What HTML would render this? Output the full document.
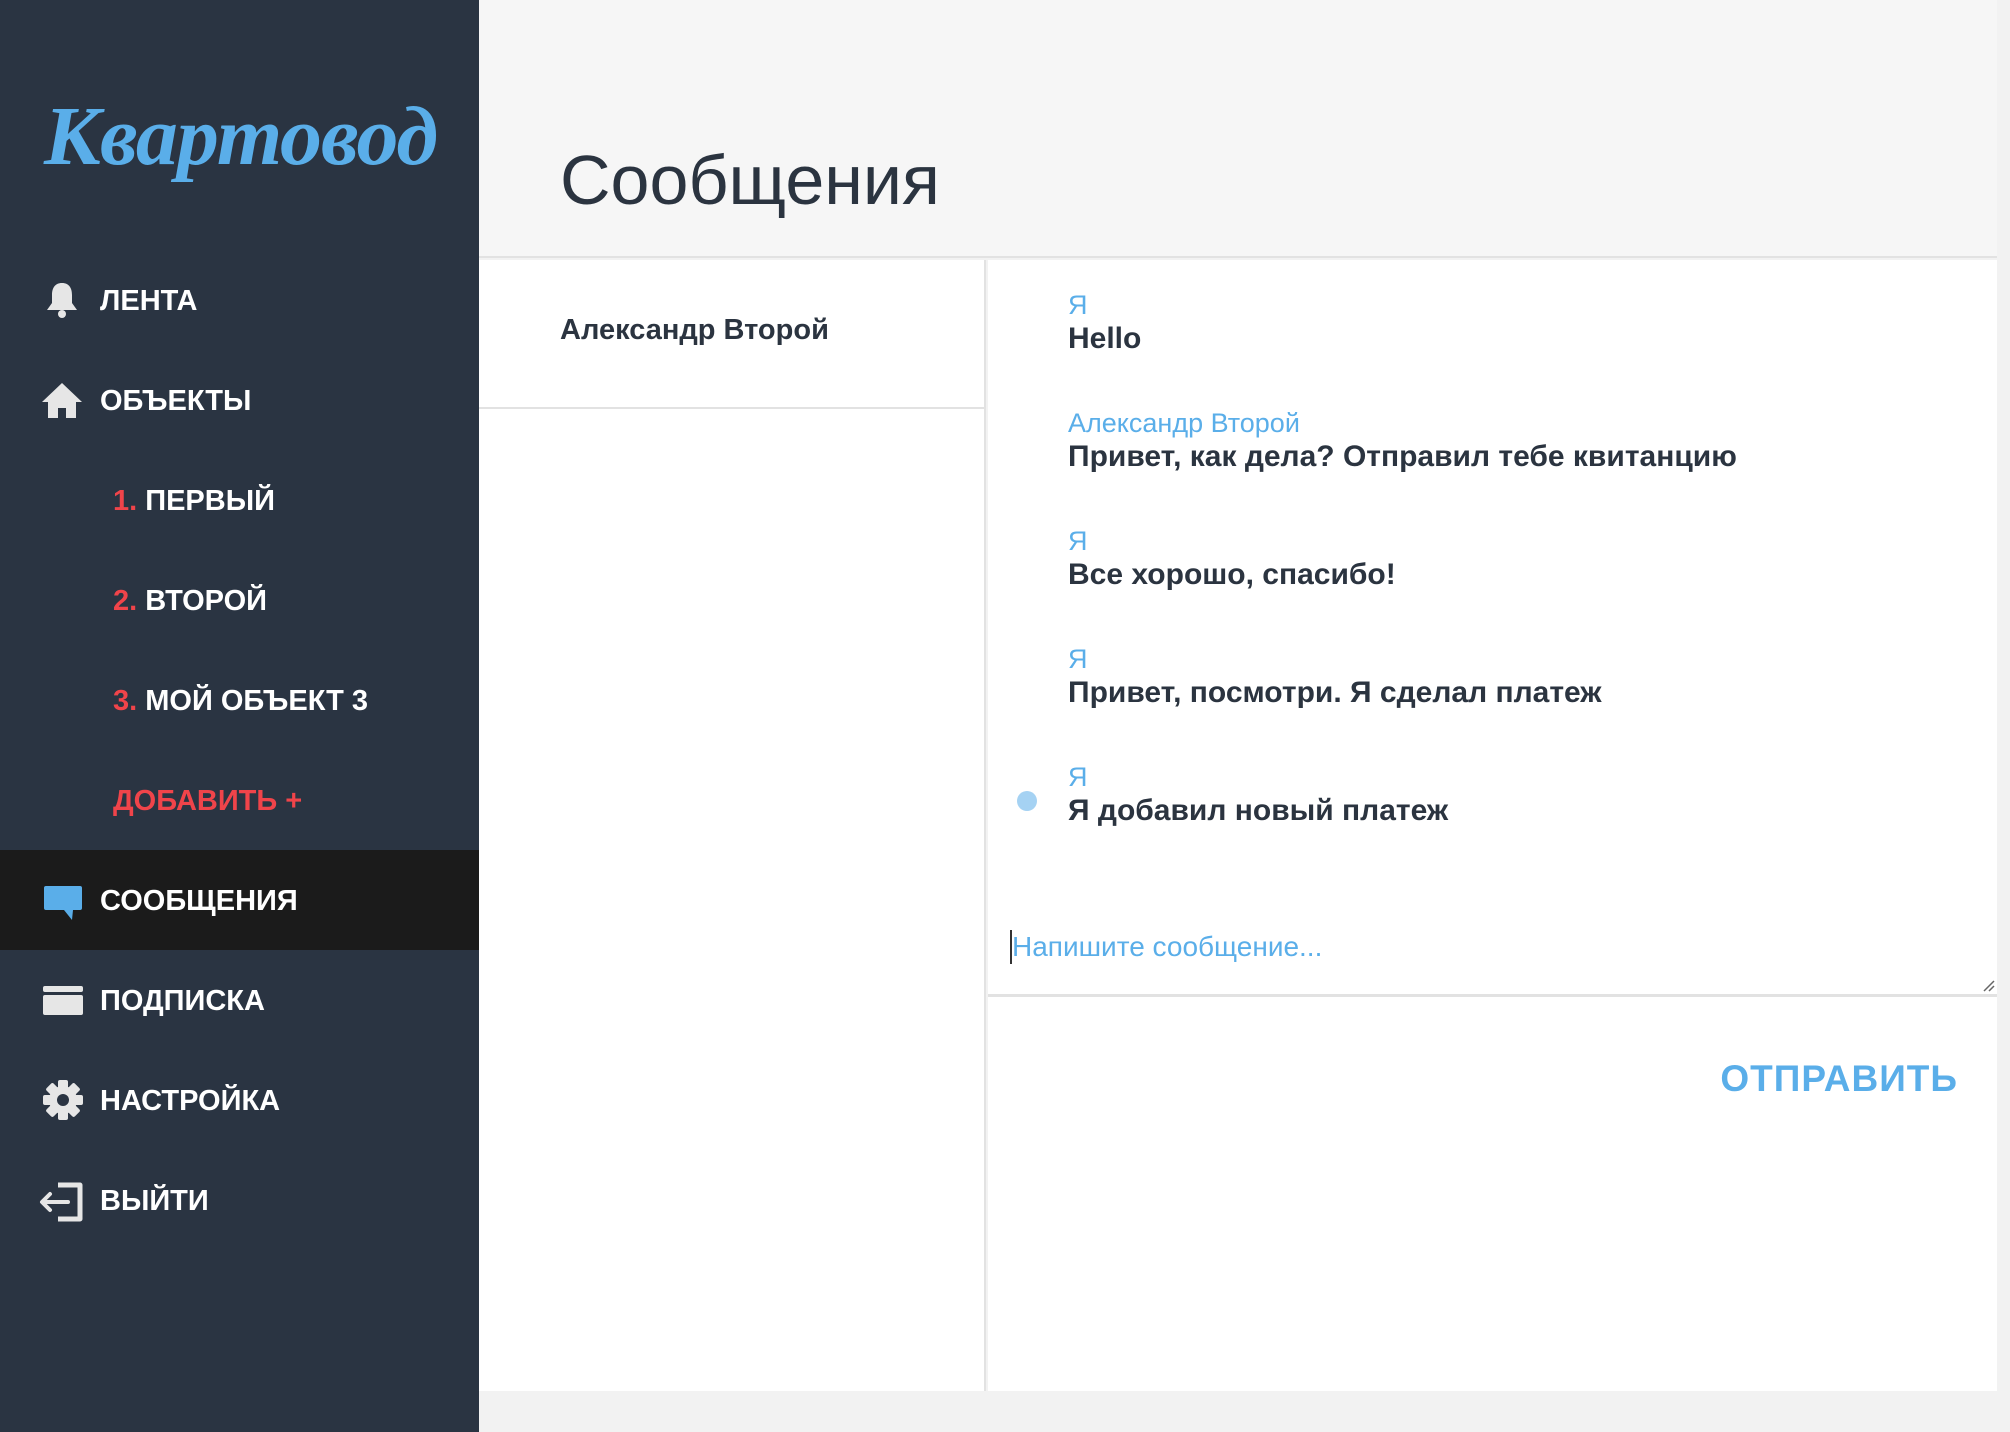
<!DOCTYPE html>
<html><head><meta charset="utf-8"><style>
*{margin:0;padding:0;box-sizing:border-box}
body{width:2010px;height:1432px;background:#f2f2f2;font-family:"Liberation Sans",sans-serif;position:relative;overflow:hidden}
.sb{position:absolute;left:0;top:0;width:479px;height:1432px;background:#2a3442}
.logo{position:absolute;left:44px;top:88px;font-family:"Liberation Serif",serif;font-style:italic;font-weight:bold;font-size:84px;color:#5aaee9;letter-spacing:-1px}
.mi{position:absolute;left:0;width:479px;height:100px;color:#fff;font-weight:bold;font-size:29px;line-height:102px;padding-left:100px}
.mi.sub{padding-left:113px}
.mi.act{background:#1b1b1b}
.red{color:#f0444a}
.ic{position:absolute;left:42px;top:30px}
.hdr{position:absolute;left:479px;top:0;width:1518px;height:258px;background:#f6f6f6;border-bottom:2px solid #e2e2e2}
.hdr h1{position:absolute;left:81px;top:140px;font-weight:normal;font-size:70px;color:#2b3440}
.left{position:absolute;left:479px;top:260px;width:507px;height:1131px;background:#fff;border-right:2px solid #e2e2e2}
.contact{height:149px;border-bottom:2px solid #e2e2e2;font-size:29px;font-weight:bold;color:#2b3440;padding:54px 0 0 81px}
.right{position:absolute;left:988px;top:260px;width:1009px;height:1131px;background:#fff}
.msg{position:absolute;left:80px}
.msg .n{font-size:27px;color:#5aaee9;line-height:32px}
.msg .t{font-size:30px;font-weight:bold;color:#2b3440;line-height:36px}
.ta{position:absolute;left:0;top:655px;width:1009px;height:82px;border-bottom:3px solid #e2e2e2}
.ph{position:absolute;left:22px;top:15px;font-size:28px;color:#5aaee9;border-left:2px solid #333;line-height:34px}
.send{position:absolute;right:39px;top:798px;font-size:37px;font-weight:bold;color:#5aaee9;letter-spacing:1px}
.dot{position:absolute;left:29px;top:531px;width:20px;height:20px;border-radius:50%;background:#a5d2f3}
</style></head><body>
<div class="sb">
<div class="logo">Квартовод</div>
<div class="mi" style="top:250px"><svg class="ic" width="40" height="40" viewBox="0 0 40 40"><path d="M20 3c-7 0-10 5-10 12v8l-5 7h30l-5-7v-8c0-7-3-12-10-12z" fill="#e6e6e6"/><circle cx="20" cy="34" r="4" fill="#e6e6e6"/></svg>ЛЕНТА</div>
<div class="mi" style="top:350px"><svg class="ic" width="44" height="40" viewBox="0 0 44 40" style="left:40px"><path d="M22 3L2 22h6v16h10V28h8v10h10V22h6z" fill="#e6e6e6"/></svg>ОБЪЕКТЫ</div>
<div class="mi sub" style="top:450px"><span class="red">1.</span> ПЕРВЫЙ</div>
<div class="mi sub" style="top:550px"><span class="red">2.</span> ВТОРОЙ</div>
<div class="mi sub" style="top:650px"><span class="red">3.</span> МОЙ ОБЪЕКТ 3</div>
<div class="mi sub red" style="top:750px">ДОБАВИТЬ +</div>
<div class="mi act" style="top:850px"><svg class="ic" width="40" height="40" viewBox="0 0 40 40" style="left:43px;top:34px"><path d="M3 2h34a2 2 0 0 1 2 2v20a2 2 0 0 1-2 2H30l-1 10-8-10H3a2 2 0 0 1-2-2V4a2 2 0 0 1 2-2z" fill="#5aaee9"/></svg>СООБЩЕНИЯ</div>
<div class="mi" style="top:950px"><svg class="ic" width="42" height="34" viewBox="0 0 42 34" style="top:35px"><rect x="1" y="1" width="40" height="6" rx="2" fill="#e6e6e6"/><rect x="1" y="10" width="40" height="20" rx="2" fill="#e6e6e6"/></svg>ПОДПИСКА</div>
<div class="mi" style="top:1050px"><svg class="ic" width="42" height="42" viewBox="0 0 42 42" style="top:29px"><g fill="#e6e6e6"><circle cx="21" cy="21" r="14"/><rect x="16" y="1" width="10" height="40" rx="2"/><rect x="16" y="1" width="10" height="40" rx="2" transform="rotate(45 21 21)"/><rect x="16" y="1" width="10" height="40" rx="2" transform="rotate(90 21 21)"/><rect x="16" y="1" width="10" height="40" rx="2" transform="rotate(135 21 21)"/></g><circle cx="21" cy="21" r="6" fill="#2a3442"/></svg>НАСТРОЙКА</div>
<div class="mi" style="top:1150px"><svg class="ic" width="46" height="40" viewBox="0 0 46 40" style="left:38px;top:32px"><path d="M20 3h22v34H20" fill="none" stroke="#e6e6e6" stroke-width="5" stroke-linejoin="round"/><path d="M30 20H5M12 12l-8 8 8 8" fill="none" stroke="#e6e6e6" stroke-width="4" stroke-linecap="round" stroke-linejoin="round"/></svg>ВЫЙТИ</div>
</div>
<div class="hdr"><h1>Сообщения</h1></div>
<div class="left"><div class="contact">Александр Второй</div></div>
<div class="right">
<div class="msg" style="top:29px"><div class="n">Я</div><div class="t">Hello</div></div>
<div class="msg" style="top:147px"><div class="n">Александр Второй</div><div class="t">Привет, как дела? Отправил тебе квитанцию</div></div>
<div class="msg" style="top:265px"><div class="n">Я</div><div class="t">Все хорошо, спасибо!</div></div>
<div class="msg" style="top:383px"><div class="n">Я</div><div class="t">Привет, посмотри. Я сделал платеж</div></div>
<div class="msg" style="top:501px"><div class="n">Я</div><div class="t">Я добавил новый платеж</div></div>
<div class="dot"></div>
<div class="ta"><div class="ph">Напишите сообщение...</div><svg style="position:absolute;right:2px;bottom:2px" width="14" height="14" viewBox="0 0 14 14"><path d="M13 3L3 13M13 8L8 13" stroke="#666" stroke-width="1.5"/></svg></div>
<div class="send">ОТПРАВИТЬ</div>
</div>
</body></html>
